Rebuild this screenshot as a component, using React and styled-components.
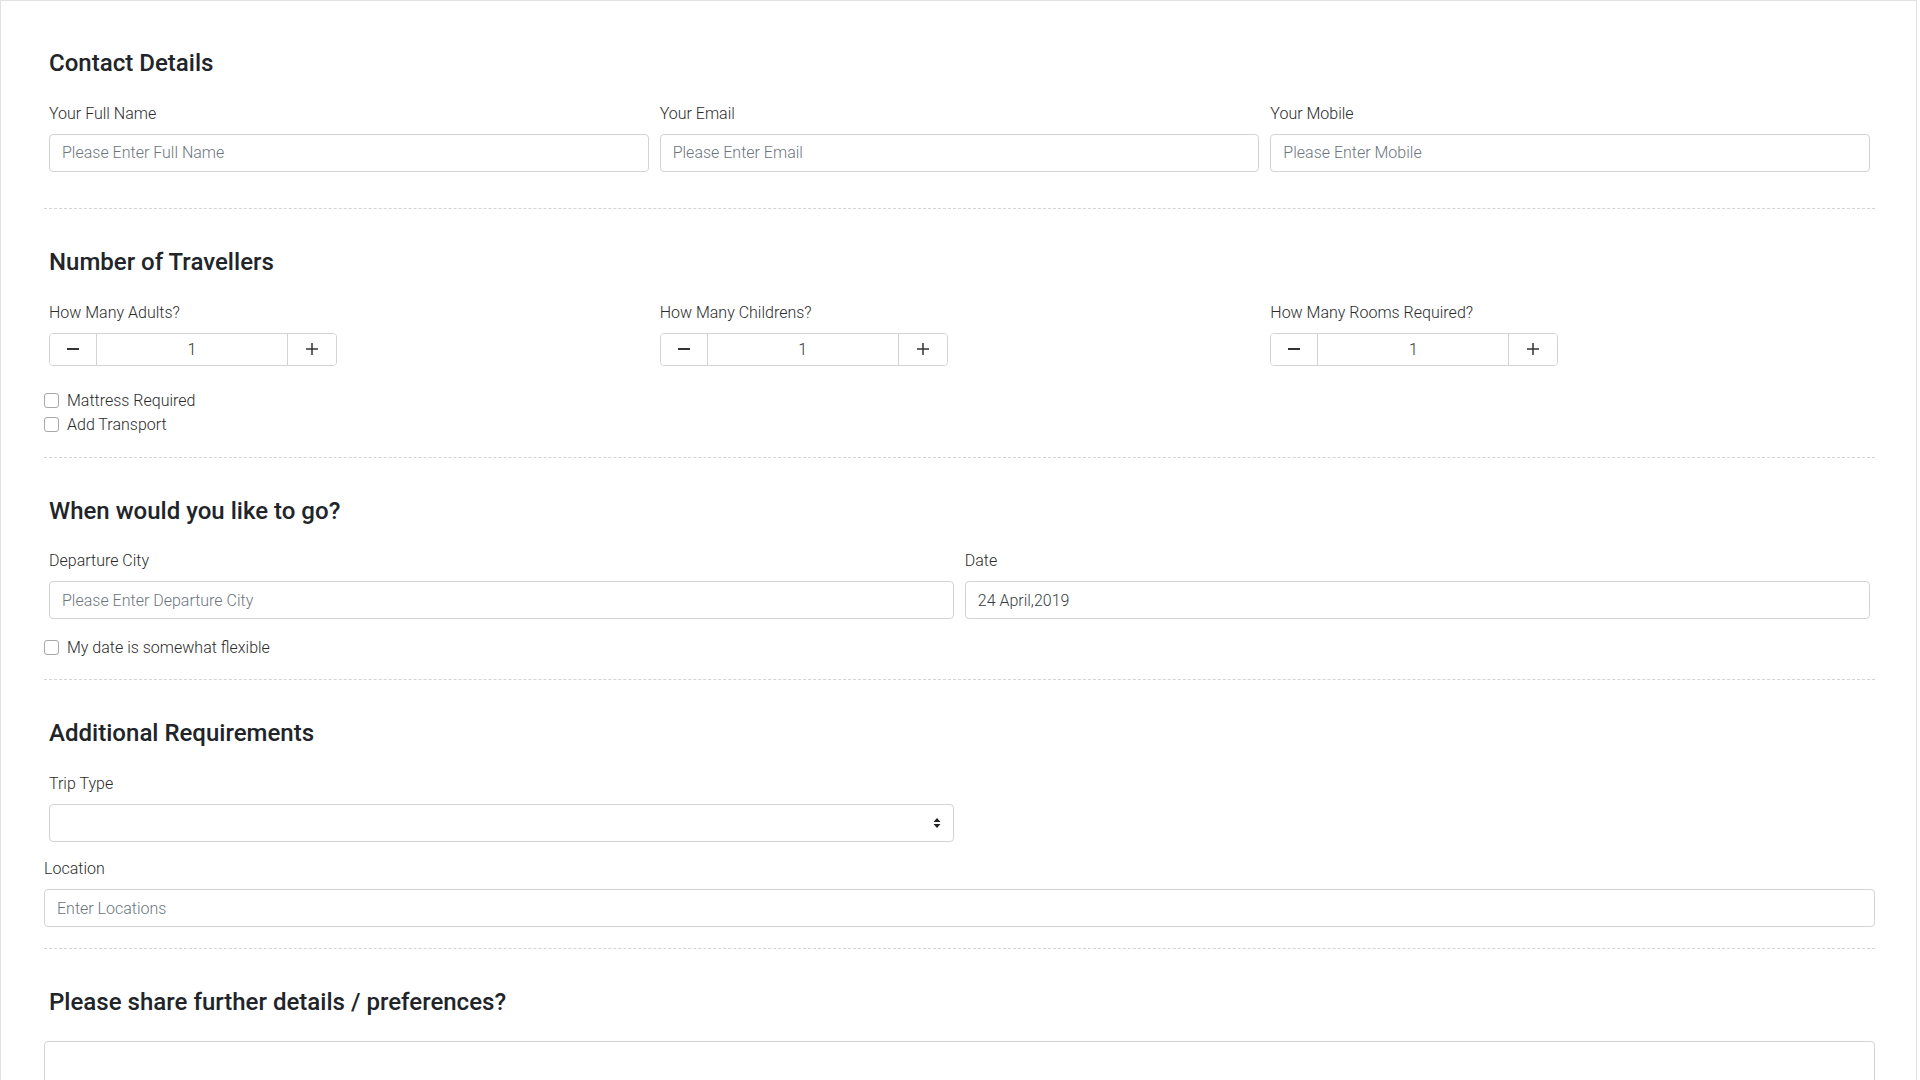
import React from "react";
import styled, { createGlobalStyle } from "styled-components";

const Global = createGlobalStyle`
  * { box-sizing: border-box; }
  html, body { margin: 0; padding: 0; background: #fff; }
  body { font-family: Roboto, "Liberation Sans", Arial, sans-serif; color: #212529; overflow: hidden; }
`;

const LIGHT = `"Roboto Light", Roboto, "Liberation Sans", Arial, sans-serif`;
const MEDIUM = `"Roboto Medium", Roboto, "Liberation Sans", Arial, sans-serif`;

const Card = styled.div`
  width: 1917px;
  min-height: 1080px;
  border: 1px solid #e2e2e2;
  border-bottom: none;
  padding: 0 41px 0 43px;
  background: #fff;
`;

const Section = styled.section`
  padding: ${(p) => p.$pt}px 0 20px;
  border-bottom: ${(p) => (p.$last ? "none" : "1px dashed #d4d4d4")};
`;

const Heading = styled.h4`
  margin: 0 0 24px;
  padding: 0 5px;
  font-family: ${MEDIUM};
  font-size: 24px;
  line-height: 28.8px;
  font-weight: 500;
  color: #212529;
`;

const Row = styled.div`
  display: grid;
  grid-template-columns: repeat(${(p) => p.$cols}, 1fr);
  column-gap: ${(p) => (p.$cols === 3 ? "11px" : "10.5px")};
  padding: 0 5px;
`;

const Group = styled.div`
  margin-bottom: ${(p) => (p.$mb != null ? p.$mb : 16)}px;
`;

const Label = styled.label`
  display: block;
  margin-bottom: 8px;
  font-family: ${LIGHT};
  font-size: 16px;
  line-height: 24px;
  font-weight: 300;
  color: #2b2b2b;
`;

const Input = styled.input`
  display: block;
  width: 100%;
  height: 38px;
  padding: 0 12px;
  border: 1px solid #d3d3d3;
  border-radius: 4px;
  font-family: ${LIGHT};
  font-size: 16px;
  font-weight: 300;
  color: #3a3f44;
  background: #fff;
  outline: none;
  &::placeholder { color: #6c757d; opacity: 1; }
`;

const SelectWrap = styled.div`
  position: relative;
`;

const Select = styled.select`
  display: block;
  width: 100%;
  height: 38px;
  padding: 0 12px;
  border: 1px solid #d3d3d3;
  border-radius: 4px;
  background: #fff;
  appearance: none;
  font-family: ${LIGHT};
  font-size: 16px;
  color: #495057;
  outline: none;
`;

const SelectArrow = styled.svg`
  position: absolute;
  right: 13px;
  top: 50%;
  transform: translateY(-50%);
  pointer-events: none;
`;

const Stepper = styled.div`
  display: flex;
  width: 288px;
  height: 33px;
  border: 1px solid #d3d3d3;
  border-radius: 4px;
  overflow: hidden;
`;

const StepBtn = styled.button`
  flex: 0 0 ${(p) => p.$w}px;
  display: flex;
  align-items: center;
  justify-content: center;
  border: none;
  background: #fff;
  padding: 0;
  color: #333;
  ${(p) => (p.$side === "left" ? "border-right: 1px solid #d3d3d3;" : "border-left: 1px solid #d3d3d3;")}
`;

const StepValue = styled.div`
  flex: 1;
  display: flex;
  align-items: center;
  justify-content: center;
  font-family: ${LIGHT};
  font-size: 16px;
  font-weight: 300;
  color: #333;
`;

const Checks = styled.div`
  margin-top: ${(p) => p.$mt || 0}px;
  display: flex;
  flex-direction: column;
`;

const CheckRow = styled.label`
  display: flex;
  align-items: center;
  gap: 8px;
  height: 24px;
  font-family: ${LIGHT};
  font-size: 16px;
  font-weight: 300;
  color: #2b2b2b;
`;

const Box = styled.span`
  width: 15px;
  height: 15px;
  border: 1px solid #a8a8a8;
  border-radius: 3px;
  background: #fff;
`;

const PlainGroup = styled.div`
  margin-bottom: 1px;
`;

const TextArea = styled.textarea`
  display: block;
  width: 100%;
  height: 150px;
  border: 1px solid #d3d3d3;
  border-radius: 4px;
  resize: none;
  outline: none;
`;

const Field = ({ label, placeholder, value, mb }) => (
  <Group $mb={mb}>
    <Label>{label}</Label>
    <Input placeholder={placeholder} defaultValue={value} />
  </Group>
);

const Minus = () => (
  <svg width="14" height="14" viewBox="0 0 14 14">
    <rect x="1" y="6" width="12" height="2" fill="#333" />
  </svg>
);
const Plus = () => (
  <svg width="14" height="14" viewBox="0 0 14 14">
    <rect x="1" y="6.25" width="12" height="1.5" fill="#333" />
    <rect x="6.25" y="1" width="1.5" height="12" fill="#333" />
  </svg>
);

const Counter = ({ label }) => (
  <div>
    <Label>{label}</Label>
    <Stepper>
      <StepBtn $w={47} $side="left"><Minus /></StepBtn>
      <StepValue>1</StepValue>
      <StepBtn $w={49} $side="right"><Plus /></StepBtn>
    </Stepper>
  </div>
);

const Check = ({ children }) => (
  <CheckRow>
    <Box />
    {children}
  </CheckRow>
);

export default function App() {
  return (
    <>
      <Global />
      <Card>
        <Section $pt={48}>
          <Heading>Contact Details</Heading>
          <Row $cols={3}>
            <Field label="Your Full Name" placeholder="Please Enter Full Name" />
            <Field label="Your Email" placeholder="Please Enter Email" />
            <Field label="Your Mobile" placeholder="Please Enter Mobile" />
          </Row>
        </Section>

        <Section $pt={39}>
          <Heading>Number of Travellers</Heading>
          <Row $cols={3}>
            <Counter label="How Many Adults?" />
            <Counter label="How Many Childrens?" />
            <Counter label="How Many Rooms Required?" />
          </Row>
          <Checks $mt={23}>
            <Check>Mattress Required</Check>
            <Check>Add Transport</Check>
          </Checks>
        </Section>

        <Section $pt={39}>
          <Heading>When would you like to go?</Heading>
          <Row $cols={2}>
            <Field label="Departure City" placeholder="Please Enter Departure City" />
            <Field label="Date" value="24 April,2019" />
          </Row>
          <Checks>
            <Check>My date is somewhat flexible</Check>
          </Checks>
        </Section>

        <Section $pt={39}>
          <Heading>Additional Requirements</Heading>
          <Row $cols={2}>
            <Group $mb={15}>
              <Label>Trip Type</Label>
              <SelectWrap>
                <Select defaultValue="">
                  <option value=""></option>
                </Select>
                <SelectArrow width="8" height="12" viewBox="0 0 8 12">
                  <path d="M4 1 L7.5 5 L0.5 5 Z" fill="#222" />
                  <path d="M4 11 L7.5 7 L0.5 7 Z" fill="#222" />
                </SelectArrow>
              </SelectWrap>
            </Group>
          </Row>
          <PlainGroup>
            <Label>Location</Label>
            <Input placeholder="Enter Locations" />
          </PlainGroup>
        </Section>

        <Section $pt={39} $last>
          <Heading>Please share further details / preferences?</Heading>
          <TextArea />
        </Section>
      </Card>
    </>
  );
}
